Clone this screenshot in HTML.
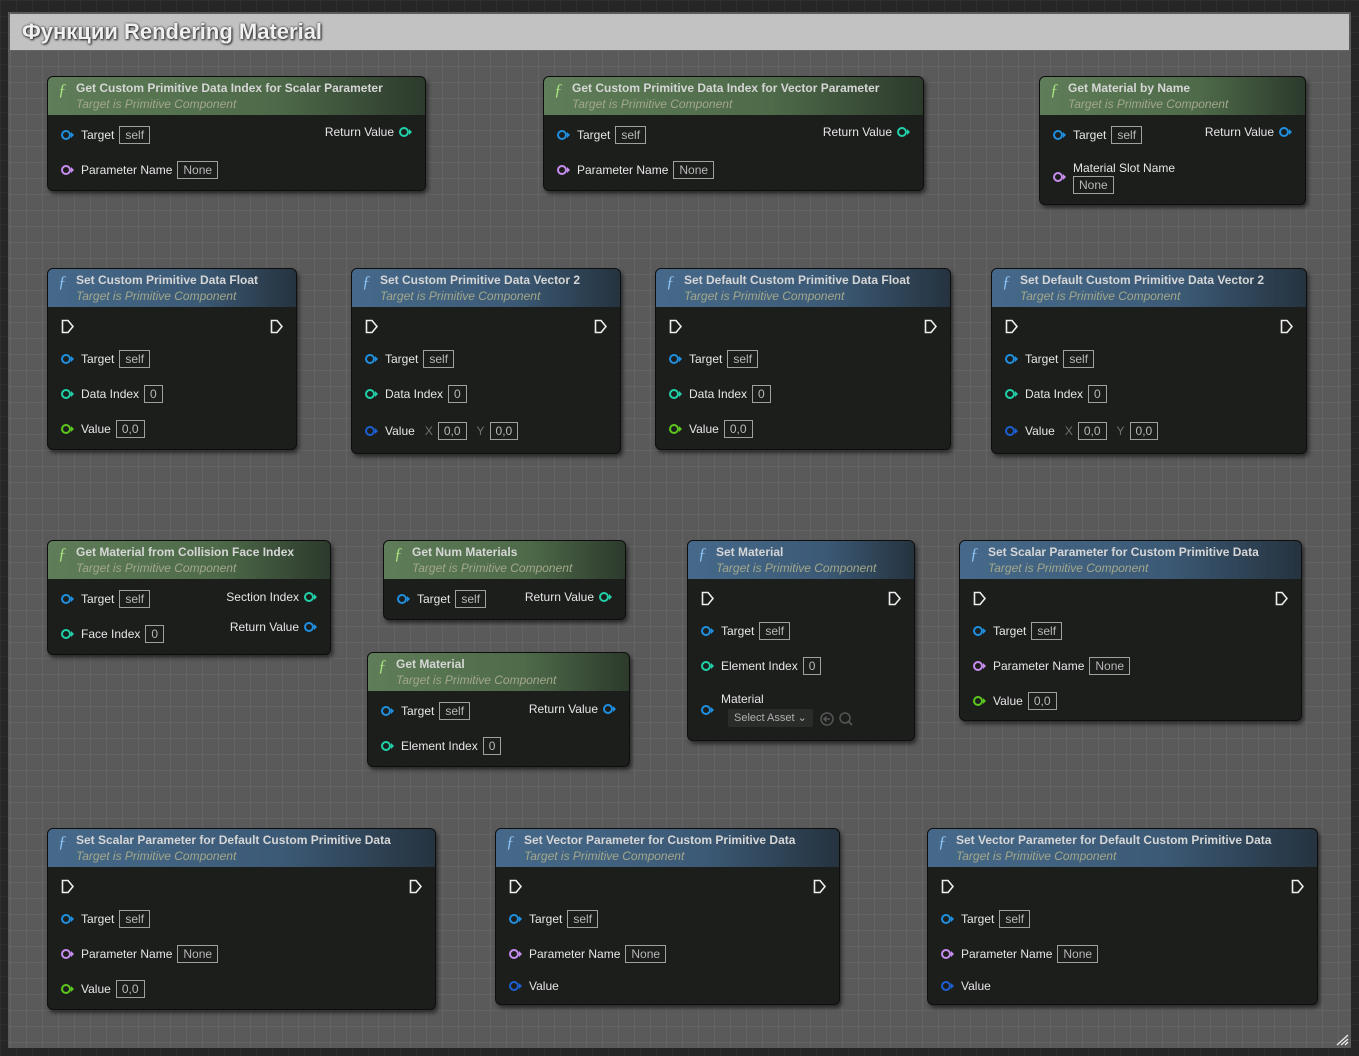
<!DOCTYPE html>
<html><head><meta charset="utf-8"><style>
*{margin:0;padding:0;box-sizing:border-box}
body{width:1359px;height:1056px;overflow:hidden;background:#262626;font-family:"Liberation Sans",sans-serif;position:relative;
background-image:linear-gradient(#2e2e2e 1px,transparent 1px),linear-gradient(90deg,#2e2e2e 1px,transparent 1px);background-size:16px 16px}
.cm{position:absolute;left:8px;top:12px;width:1343px;height:1036px;background:#5a5a5a;
background-image:linear-gradient(#646464 1px,transparent 1px),linear-gradient(90deg,#646464 1px,transparent 1px);background-size:16px 16px;background-position:2px 6px}
.ct{position:absolute;left:10px;top:14px;width:1339px;height:36px;background:#c2c2c2;color:#f0f0f0;font-weight:bold;font-size:22px;padding:5px 12px;text-shadow:1px 1px 2px #222,0 0 2px #333}
.n{position:absolute;background:#1c1e1c;border-radius:6px;border:1px solid #0e0e0e;box-shadow:2px 3px 4px rgba(0,0,0,.55)}
.h{position:absolute;left:0;top:0;right:0;height:38px;border-radius:5px 5px 0 0}
.g{background:linear-gradient(90deg,#5f7d58 0%,#4e6a49 60%,#2c3a2c 100%)}
.b{background:linear-gradient(90deg,#46698a 0%,#3c5a76 60%,#25333f 100%)}
.f{position:absolute;left:10px;top:3px;color:#a8e080;font-style:italic;font-size:17px;font-family:"Liberation Serif",serif}
.b .f{color:#8cc0f0}
.t{position:absolute;left:28px;top:4px;color:#d6d6d6;font-weight:bold;font-size:12px;white-space:nowrap}
.s{position:absolute;left:28px;top:20px;color:#a3a88a;font-style:italic;font-size:12px;white-space:nowrap}
.r{position:absolute;left:13px;height:16px;display:flex;align-items:center;color:#e6e6e6;font-size:12px;white-space:nowrap;margin-top:-1px}
.rr{position:absolute;right:13px;height:16px;display:flex;align-items:center;color:#e6e6e6;font-size:12px;white-space:nowrap;margin-top:-1px}
.p{width:13px;height:10px;position:relative;margin-right:7px}
.rr .p{margin-right:0;margin-left:5px}
.p::before{content:"";position:absolute;left:0;top:0;width:10px;height:10px;border-radius:50%;border:2px solid var(--c);box-sizing:border-box}
.p::after{content:"";position:absolute;left:10px;top:2px;border-left:3px solid var(--c);border-top:3px solid transparent;border-bottom:3px solid transparent}
.bl{--c:#1f8fe0}.pu{--c:#c88ef0}.te{--c:#22d0a8}.gr{--c:#5ec81e}.db{--c:#1c5fd0}
.x{border:1px solid #a0a0a0;color:#b8b8b8;padding:0 5px;height:18px;line-height:16px;margin-left:5px;font-size:12px}
.ax{color:#707070;margin:0 0 0 10px}
.e{position:absolute;width:13px;height:15px}
.sel{position:absolute;background:#2a2c2a;color:#b0b0b0;font-size:11px;height:18px;line-height:18px;padding:0 6px;border-radius:2px}
</style></head><body>
<div class="cm"></div>
<div class="ct">Функции Rendering Material</div>

<div class="n" style="left:47px;top:76px;width:379px;height:115px">
<div class="h g"><span class="f">ƒ</span><div class="t">Get Custom Primitive Data Index for Scalar Parameter</div><div class="s">Target is Primitive Component</div></div>
<div class="r" style="top:51px"><span class="p bl"></span>Target<span class="x">self</span></div>
<div class="r" style="top:86px"><span class="p pu"></span>Parameter Name<span class="x">None</span></div>
<div class="rr" style="top:48px">Return Value<span class="p te"></span></div>
</div>
<div class="n" style="left:543px;top:76px;width:381px;height:115px">
<div class="h g"><span class="f">ƒ</span><div class="t">Get Custom Primitive Data Index for Vector Parameter</div><div class="s">Target is Primitive Component</div></div>
<div class="r" style="top:51px"><span class="p bl"></span>Target<span class="x">self</span></div>
<div class="r" style="top:86px"><span class="p pu"></span>Parameter Name<span class="x">None</span></div>
<div class="rr" style="top:48px">Return Value<span class="p te"></span></div>
</div>
<div class="n" style="left:1039px;top:76px;width:267px;height:129px">
<div class="h g"><span class="f">ƒ</span><div class="t">Get Material by Name</div><div class="s">Target is Primitive Component</div></div>
<div class="r" style="top:51px"><span class="p bl"></span>Target<span class="x">self</span></div>
<div class="r" style="top:93px"><span class="p pu"></span></div>
<div class="r" style="top:84px;left:33px">Material Slot Name</div>
<div class="r" style="top:101px;left:28px"><span class="x">None</span></div>
<div class="rr" style="top:48px">Return Value<span class="p bl"></span></div>
</div>

<div class="n" style="left:47px;top:268px;width:250px;height:182px">
<div class="h b"><span class="f">ƒ</span><div class="t">Set Custom Primitive Data Float</div><div class="s">Target is Primitive Component</div></div>
<svg class="e" style="left:13px;top:50px"><path d="M1.5 1.5H7L12 7.5L7 13.5H1.5Z" fill="none" stroke="#eee" stroke-width="1.6"/></svg>
<svg class="e" style="right:13px;top:50px"><path d="M1.5 1.5H7L12 7.5L7 13.5H1.5Z" fill="none" stroke="#eee" stroke-width="1.6"/></svg>
<div class="r" style="top:83px"><span class="p bl"></span>Target<span class="x">self</span></div>
<div class="r" style="top:118px"><span class="p te"></span>Data Index<span class="x">0</span></div>
<div class="r" style="top:153px"><span class="p gr"></span>Value<span class="x">0,0</span></div>
</div>
<div class="n" style="left:351px;top:268px;width:270px;height:186px">
<div class="h b"><span class="f">ƒ</span><div class="t">Set Custom Primitive Data Vector 2</div><div class="s">Target is Primitive Component</div></div>
<svg class="e" style="left:13px;top:50px"><path d="M1.5 1.5H7L12 7.5L7 13.5H1.5Z" fill="none" stroke="#eee" stroke-width="1.6"/></svg>
<svg class="e" style="right:13px;top:50px"><path d="M1.5 1.5H7L12 7.5L7 13.5H1.5Z" fill="none" stroke="#eee" stroke-width="1.6"/></svg>
<div class="r" style="top:83px"><span class="p bl"></span>Target<span class="x">self</span></div>
<div class="r" style="top:118px"><span class="p te"></span>Data Index<span class="x">0</span></div>
<div class="r" style="top:155px"><span class="p db"></span>Value<span class="ax">X</span><span class="x">0,0</span><span class="ax">Y</span><span class="x">0,0</span></div>
</div>
<div class="n" style="left:655px;top:268px;width:296px;height:182px">
<div class="h b"><span class="f">ƒ</span><div class="t">Set Default Custom Primitive Data Float</div><div class="s">Target is Primitive Component</div></div>
<svg class="e" style="left:13px;top:50px"><path d="M1.5 1.5H7L12 7.5L7 13.5H1.5Z" fill="none" stroke="#eee" stroke-width="1.6"/></svg>
<svg class="e" style="right:13px;top:50px"><path d="M1.5 1.5H7L12 7.5L7 13.5H1.5Z" fill="none" stroke="#eee" stroke-width="1.6"/></svg>
<div class="r" style="top:83px"><span class="p bl"></span>Target<span class="x">self</span></div>
<div class="r" style="top:118px"><span class="p te"></span>Data Index<span class="x">0</span></div>
<div class="r" style="top:153px"><span class="p gr"></span>Value<span class="x">0,0</span></div>
</div>
<div class="n" style="left:991px;top:268px;width:316px;height:186px">
<div class="h b"><span class="f">ƒ</span><div class="t">Set Default Custom Primitive Data Vector 2</div><div class="s">Target is Primitive Component</div></div>
<svg class="e" style="left:13px;top:50px"><path d="M1.5 1.5H7L12 7.5L7 13.5H1.5Z" fill="none" stroke="#eee" stroke-width="1.6"/></svg>
<svg class="e" style="right:13px;top:50px"><path d="M1.5 1.5H7L12 7.5L7 13.5H1.5Z" fill="none" stroke="#eee" stroke-width="1.6"/></svg>
<div class="r" style="top:83px"><span class="p bl"></span>Target<span class="x">self</span></div>
<div class="r" style="top:118px"><span class="p te"></span>Data Index<span class="x">0</span></div>
<div class="r" style="top:155px"><span class="p db"></span>Value<span class="ax">X</span><span class="x">0,0</span><span class="ax">Y</span><span class="x">0,0</span></div>
</div>

<div class="n" style="left:47px;top:540px;width:284px;height:115px">
<div class="h g"><span class="f">ƒ</span><div class="t">Get Material from Collision Face Index</div><div class="s">Target is Primitive Component</div></div>
<div class="r" style="top:51px"><span class="p bl"></span>Target<span class="x">self</span></div>
<div class="r" style="top:86px"><span class="p te"></span>Face Index<span class="x">0</span></div>
<div class="rr" style="top:49px">Section Index<span class="p te"></span></div>
<div class="rr" style="top:79px">Return Value<span class="p bl"></span></div>
</div>
<div class="n" style="left:383px;top:540px;width:243px;height:80px">
<div class="h g"><span class="f">ƒ</span><div class="t">Get Num Materials</div><div class="s">Target is Primitive Component</div></div>
<div class="r" style="top:51px"><span class="p bl"></span>Target<span class="x">self</span></div>
<div class="rr" style="top:49px">Return Value<span class="p te"></span></div>
</div>
<div class="n" style="left:367px;top:652px;width:263px;height:115px">
<div class="h g"><span class="f">ƒ</span><div class="t">Get Material</div><div class="s">Target is Primitive Component</div></div>
<div class="r" style="top:51px"><span class="p bl"></span>Target<span class="x">self</span></div>
<div class="r" style="top:86px"><span class="p te"></span>Element Index<span class="x">0</span></div>
<div class="rr" style="top:49px">Return Value<span class="p bl"></span></div>
</div>
<div class="n" style="left:687px;top:540px;width:228px;height:201px">
<div class="h b"><span class="f">ƒ</span><div class="t">Set Material</div><div class="s">Target is Primitive Component</div></div>
<svg class="e" style="left:13px;top:50px"><path d="M1.5 1.5H7L12 7.5L7 13.5H1.5Z" fill="none" stroke="#eee" stroke-width="1.6"/></svg>
<svg class="e" style="right:13px;top:50px"><path d="M1.5 1.5H7L12 7.5L7 13.5H1.5Z" fill="none" stroke="#eee" stroke-width="1.6"/></svg>
<div class="r" style="top:83px"><span class="p bl"></span>Target<span class="x">self</span></div>
<div class="r" style="top:118px"><span class="p te"></span>Element Index<span class="x">0</span></div>
<div class="r" style="top:162px"><span class="p bl"></span></div>
<div class="r" style="top:151px;left:33px">Material</div>
<div class="sel" style="left:40px;top:168px">Select Asset &#8964;</div>
<svg style="position:absolute;left:132px;top:170px" width="34" height="16"><circle cx="7" cy="8" r="6" fill="none" stroke="#555" stroke-width="1.5"/><path d="M10 8H4M6.5 5.5L4 8L6.5 10.5" stroke="#555" fill="none" stroke-width="1.5"/><circle cx="25" cy="7" r="5" fill="none" stroke="#555" stroke-width="1.5"/><path d="M28.5 10.5L32 14" stroke="#555" stroke-width="1.8"/></svg>
</div>
<div class="n" style="left:959px;top:540px;width:343px;height:181px">
<div class="h b"><span class="f">ƒ</span><div class="t">Set Scalar Parameter for Custom Primitive Data</div><div class="s">Target is Primitive Component</div></div>
<svg class="e" style="left:13px;top:50px"><path d="M1.5 1.5H7L12 7.5L7 13.5H1.5Z" fill="none" stroke="#eee" stroke-width="1.6"/></svg>
<svg class="e" style="right:13px;top:50px"><path d="M1.5 1.5H7L12 7.5L7 13.5H1.5Z" fill="none" stroke="#eee" stroke-width="1.6"/></svg>
<div class="r" style="top:83px"><span class="p bl"></span>Target<span class="x">self</span></div>
<div class="r" style="top:118px"><span class="p pu"></span>Parameter Name<span class="x">None</span></div>
<div class="r" style="top:153px"><span class="p gr"></span>Value<span class="x">0,0</span></div>
</div>

<div class="n" style="left:47px;top:828px;width:389px;height:182px">
<div class="h b"><span class="f">ƒ</span><div class="t">Set Scalar Parameter for Default Custom Primitive Data</div><div class="s">Target is Primitive Component</div></div>
<svg class="e" style="left:13px;top:50px"><path d="M1.5 1.5H7L12 7.5L7 13.5H1.5Z" fill="none" stroke="#eee" stroke-width="1.6"/></svg>
<svg class="e" style="right:13px;top:50px"><path d="M1.5 1.5H7L12 7.5L7 13.5H1.5Z" fill="none" stroke="#eee" stroke-width="1.6"/></svg>
<div class="r" style="top:83px"><span class="p bl"></span>Target<span class="x">self</span></div>
<div class="r" style="top:118px"><span class="p pu"></span>Parameter Name<span class="x">None</span></div>
<div class="r" style="top:153px"><span class="p gr"></span>Value<span class="x">0,0</span></div>
</div>
<div class="n" style="left:495px;top:828px;width:345px;height:177px">
<div class="h b"><span class="f">ƒ</span><div class="t">Set Vector Parameter for Custom Primitive Data</div><div class="s">Target is Primitive Component</div></div>
<svg class="e" style="left:13px;top:50px"><path d="M1.5 1.5H7L12 7.5L7 13.5H1.5Z" fill="none" stroke="#eee" stroke-width="1.6"/></svg>
<svg class="e" style="right:13px;top:50px"><path d="M1.5 1.5H7L12 7.5L7 13.5H1.5Z" fill="none" stroke="#eee" stroke-width="1.6"/></svg>
<div class="r" style="top:83px"><span class="p bl"></span>Target<span class="x">self</span></div>
<div class="r" style="top:118px"><span class="p pu"></span>Parameter Name<span class="x">None</span></div>
<div class="r" style="top:150px"><span class="p db"></span>Value</div>
</div>
<div class="n" style="left:927px;top:828px;width:391px;height:177px">
<div class="h b"><span class="f">ƒ</span><div class="t">Set Vector Parameter for Default Custom Primitive Data</div><div class="s">Target is Primitive Component</div></div>
<svg class="e" style="left:13px;top:50px"><path d="M1.5 1.5H7L12 7.5L7 13.5H1.5Z" fill="none" stroke="#eee" stroke-width="1.6"/></svg>
<svg class="e" style="right:13px;top:50px"><path d="M1.5 1.5H7L12 7.5L7 13.5H1.5Z" fill="none" stroke="#eee" stroke-width="1.6"/></svg>
<div class="r" style="top:83px"><span class="p bl"></span>Target<span class="x">self</span></div>
<div class="r" style="top:118px"><span class="p pu"></span>Parameter Name<span class="x">None</span></div>
<div class="r" style="top:150px"><span class="p db"></span>Value</div>
</div>

<svg style="position:absolute;left:1336px;top:1034px" width="14" height="12"><path d="M1 11L12 1M5 11L12 5M9 11L12 8" stroke="#eee" stroke-width="1.3"/></svg>
</body></html>
